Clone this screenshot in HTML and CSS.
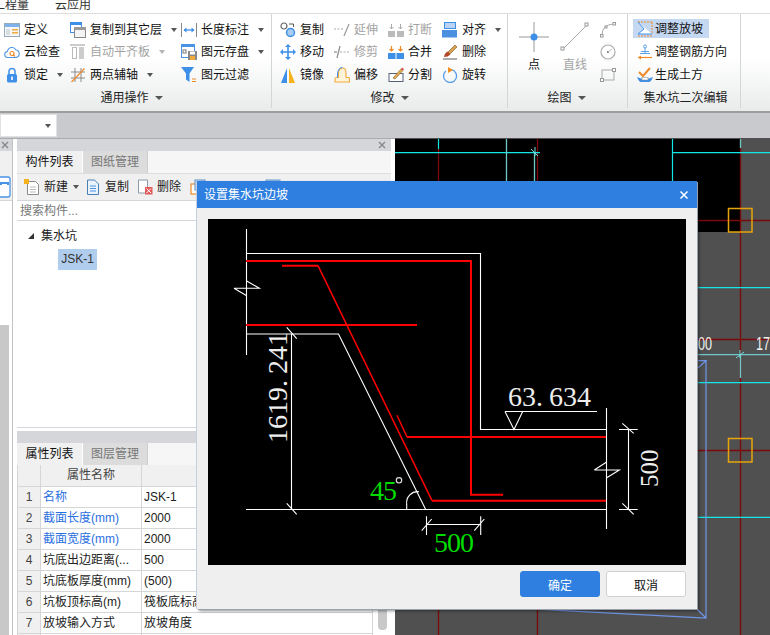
FILE: index.html
```html
<!DOCTYPE html>
<html lang="zh">
<head>
<meta charset="utf-8">
<title>设置集水坑边坡</title>
<link rel="stylesheet" href="styles.css">
</head>
<body>
<div class="app">
  <div class="menu"><span class="m1">工程量</span><span class="m2">云应用</span></div>

  <div class="ribbon">
    <section class="group g1">
      <div class="rows">
        <div class="it"><svg class="ic" viewBox="0 0 16 16"><rect x="0.5" y="1.5" width="15" height="13" fill="#f4f6f8" stroke="#9ab"/><rect x="1" y="2" width="14" height="3" fill="#7fb2ea"/><path d="M2 7h4v6H2z" fill="#d8dde2"/><path d="M8 7h6v1.500H8zM8 10h6v1.500H8z" fill="#f2a93b"/></svg><span>定义</span></div>
        <div class="it"><svg class="ic" viewBox="0 0 16 16"><path d="M4 13.500a3 3 0 0 1-.5-6A4.500 4.500 0 0 1 12 6a3.800 3.800 0 0 1 0 7.500z" fill="#fff" stroke="#4a94e6" stroke-width="1.100"/><circle cx="8" cy="9.500" r="2" fill="none" stroke="#ef8a2a" stroke-width="1.200"/><path d="M9.500 11l1.500 1.500" stroke="#ef8a2a" stroke-width="1.200"/></svg><span class="w2">云检查</span></div>
        <div class="it"><svg class="ic" viewBox="0 0 16 16"><path d="M5 7V4.500a3 3 0 0 1 6 0V7" fill="none" stroke="#4a94e6" stroke-width="1.600"/><rect x="3" y="7" width="10" height="8.500" rx="1.500" fill="#3d8fe8"/><rect x="7.200" y="9.500" width="1.600" height="3.500" fill="#fff"/></svg><span>锁定</span><i class="caret"></i></div>

        <div class="it"><svg class="ic" viewBox="0 0 16 16"><rect x="0.500" y="0.500" width="11" height="10" fill="#fff" stroke="#3d8fe8"/><rect x="0" y="0" width="12" height="3" fill="#3d8fe8"/><rect x="4.500" y="5.500" width="11" height="10" fill="#f4f4f4" stroke="#888"/><rect x="4" y="5" width="12" height="3" fill="#9a9a9a"/></svg><span>复制到其它层</span><i class="caret"></i></div>
        <div class="it off"><svg class="ic" viewBox="0 0 16 16"><path d="M0 1h15" stroke="#bbb" stroke-width="1.500"/><rect x="2.500" y="3.500" width="4" height="11" fill="#fff" stroke="#bbb"/><rect x="9" y="3" width="5" height="12" fill="#ccc"/></svg><span>自动平齐板</span><i class="caret"></i></div>
        <div class="it"><svg class="ic" viewBox="0 0 16 16"><path d="M5 1v14M11 1v14M1 5h14M1 11h14" stroke="#8a8a8a"/><path d="M1.500 15L14.500 1.500" stroke="#ef8a2a" stroke-width="1.200"/></svg><span>两点辅轴</span><i class="caret"></i></div>

        <div class="it"><svg class="ic" viewBox="0 0 16 16"><path d="M.5 1v14M15.500 1v14" stroke="#888"/><path d="M3 8h10" stroke="#3d8fe8" stroke-width="1.300"/><path d="M2.500 8l3-2.500v5zM13.500 8l-3-2.500v5z" fill="#3d8fe8"/></svg><span>长度标注</span><i class="caret"></i></div>
        <div class="it"><svg class="ic" viewBox="0 0 16 16"><rect x="0.500" y="0.500" width="13" height="13" fill="#fff" stroke="#4a94e6"/><rect x="0" y="0" width="14" height="3" fill="#4a94e6"/><rect x="2" y="6" width="3" height="3" fill="none" stroke="#777"/><rect x="7" y="7" width="9" height="9" fill="#888"/><rect x="9" y="7.500" width="5" height="3" fill="#fff"/><rect x="9" y="12" width="5" height="4" fill="#f2a93b"/></svg><span>图元存盘</span><i class="caret"></i></div>
        <div class="it"><svg class="ic" viewBox="0 0 16 16"><path d="M0 0h13L8.500 6.500V15L5 12.500V6.500z" fill="#3d8fe8"/><path d="M11 12h4M11 14.500h4" stroke="#ef8a2a" stroke-width="1.200"/></svg><span>图元过滤</span></div>
      </div>
      <div class="label">通用操作<i class="caret big"></i></div>
    </section>

    <section class="group g2">
      <div class="rows">
        <div class="it"><svg class="ic" viewBox="0 0 16 16"><circle cx="4" cy="4" r="3" fill="#fff" stroke="#666" stroke-width="1.200"/><circle cx="10.500" cy="10.500" r="4" fill="#a8cdf2" stroke="#3d8fe8" stroke-width="1.500"/><path d="M9 2h4.500v3" fill="none" stroke="#555"/></svg><span>复制</span></div>
        <div class="it"><svg class="ic" viewBox="0 0 16 16"><path d="M8 2v12M2 8h12" stroke="#3d8fe8" stroke-width="1.600"/><path d="M8 0l3 3H5zM8 16l-3-3h6zM0 8l3-3v6zM16 8l-3 3V5z" fill="#3d8fe8"/></svg><span>移动</span></div>
        <div class="it"><svg class="ic" viewBox="0 0 16 16"><path d="M7 1v15H1z" fill="#3d8fe8"/><path d="M9 1v15h6z" fill="#f6b21c"/></svg><span>镜像</span></div>

        <div class="it off"><svg class="ic" viewBox="0 0 16 16"><path d="M0 7h9" stroke="#aaa" stroke-dasharray="2 1.500"/><path d="M10 14L15 2" stroke="#999" stroke-width="1.200"/></svg><span>延伸</span></div>
        <div class="it off"><svg class="ic" viewBox="0 0 16 16"><path d="M6 8h10" stroke="#aaa" stroke-dasharray="2 1.500"/><path d="M0 8h3" stroke="#777"/><path d="M3 14L6 2" stroke="#888" stroke-width="1.200"/></svg><span>修剪</span></div>
        <div class="it"><svg class="ic" viewBox="0 0 16 16"><path d="M1 15V12q0-1.500 2-1.500h1.500V6Q5 1 8.500 1T12 6v4.500h2q1.500 0 1.500 1.500v3z" fill="#fff3d8" stroke="#f2a93b" stroke-width="1.100"/><path d="M3.500 10.500V7Q4 .5 8.500 .5" fill="none" stroke="#3d8fe8"/></svg><span>偏移</span></div>

        <div class="it off"><svg class="ic" viewBox="0 0 16 16"><rect x="0" y="9" width="7" height="6" fill="#bbb"/><rect x="9" y="9" width="7" height="6" fill="#bbb"/><path d="M3.500 2v5M1.500 5l2 2 2-2M12.500 2v5M10.500 5l2 2 2-2" fill="none" stroke="#aaa"/></svg><span>打断</span></div>
        <div class="it"><svg class="ic" viewBox="0 0 16 16"><rect x="0" y="9" width="7.500" height="6" fill="#3d8fe8"/><rect x="8.500" y="9" width="7.500" height="6" fill="#3d8fe8"/><path d="M3.500 2v5M1.500 5l2 2 2-2M12.500 2v5M10.500 5l2 2 2-2" fill="none" stroke="#ef8a2a" stroke-width="1.200"/></svg><span>合并</span></div>
        <div class="it"><svg class="ic" viewBox="0 0 16 16"><rect x="1" y="6.500" width="14" height="8" fill="#fff" stroke="#56607a"/><path d="M5 11L13 2l2 1.500L7 12z" fill="#e2b050" stroke="#8a5a2a" stroke-width=".6"/><path d="M13 2l1-1.500 2 1.500-1 1.500z" fill="#d9534f"/></svg><span>分割</span></div>

        <div class="it"><svg class="ic" viewBox="0 0 16 16"><rect x="2.500" y="0.500" width="11" height="6" fill="#b8d4f2" stroke="#3d8fe8"/><rect x="0" y="8" width="15" height="7.500" fill="#4a8fe0"/></svg><span>对齐</span><i class="caret"></i></div>
        <div class="it"><svg class="ic" viewBox="0 0 16 16"><path d="M1 15h14" stroke="#333" stroke-width=".8"/><path d="M6 8l7-7 2 2-7 7z" fill="#d9a050" stroke="#7a5a30" stroke-width=".6"/><path d="M2 13q.5-4 3.500-5.500l3 3Q6 13 2 13z" fill="#b5482a"/></svg><span>删除</span></div>
        <div class="it"><svg class="ic" viewBox="0 0 16 16"><path d="M9.500 2.600A6.500 6.500 0 1 1 3.800 4" fill="none" stroke="#5aa0e8" stroke-width="1.300"/><path d="M6 0v6l5-3z" fill="#f28c1e"/></svg><span>旋转</span></div>
      </div>
      <div class="label">修改<i class="caret big"></i></div>
    </section>

    <section class="group g3">
      <div class="draw">
        <div class="tall">
          <svg class="big-ic" viewBox="0 0 30 30"><path d="M0 15h30M15 0v30" stroke="#999"/><circle cx="15" cy="15" r="3.500" fill="#3d8fe8"/></svg>
          <span>点</span>
        </div>
        <div class="tall off">
          <svg class="big-ic" viewBox="0 0 30 30"><path d="M3 27L27 3" stroke="#aaa"/><rect x="1" y="25" width="3" height="3" fill="#fff" stroke="#999"/><rect x="25" y="1" width="3" height="3" fill="#fff" stroke="#999"/></svg>
          <span>直线</span>
        </div>
        <div class="mini">
          <svg class="ic" viewBox="0 0 16 16"><path d="M2 13Q2 3 13 2" fill="none" stroke="#aaa"/><rect x=".5" y="12.500" width="2.500" height="2.500" fill="#fff" stroke="#999"/><rect x="13" y=".5" width="2.500" height="2.500" fill="#fff" stroke="#999"/><rect x="5" y="4" width="2" height="2" fill="#fff" stroke="#999"/></svg>
          <svg class="ic" viewBox="0 0 16 16"><circle cx="8" cy="8" r="7" fill="none" stroke="#aaa" stroke-width="1.200"/><rect x="7" y="7" width="2" height="2" fill="#888"/><path d="M8 8l4-3" stroke="#bbb"/></svg>
          <svg class="ic" viewBox="0 0 16 16"><rect x="2" y="3" width="12" height="10" fill="none" stroke="#aaa"/><rect x=".5" y="11.500" width="3" height="3" fill="#fff" stroke="#999"/><rect x="12.500" y="1.500" width="3" height="3" fill="#fff" stroke="#999"/></svg>
        </div>
      </div>
      <div class="label">绘图<i class="caret big"></i></div>
    </section>

    <section class="group g4">
      <div class="stack">
        <div class="it sel"><svg class="ic" viewBox="0 0 16 16"><path d="M1 1h14M15 1v12M1 15h14" stroke="#ef8a2a" stroke-dasharray="2 1"/><path d="M1 1L7 8 1 13h14" fill="#fff" stroke="#3d8fe8"/></svg><span>调整放坡</span></div>
        <div class="it"><svg class="ic" viewBox="0 0 16 16"><circle cx="8" cy="2.500" r="1.500" fill="none" stroke="#5aa0e8"/><path d="M8 4v5M3 9.500h10M4 7.500h8" stroke="#5aa0e8"/><path d="M1 13.500h14" stroke="#ef8a2a" stroke-width="1.200"/><path d="M1 13.500l3-2v4z" fill="#ef8a2a"/></svg><span>调整钢筋方向</span></div>
        <div class="it"><svg class="ic" viewBox="0 0 16 16"><path d="M2 5l4 4 7-8" fill="none" stroke="#ef8a2a" stroke-width="2"/><path d="M0 10q8 4 16 0-2 5-4 5H4q-2 0-4-5z" fill="#3d8fe8"/><rect x="5" y="10.500" width="6" height="2.500" fill="#fff" stroke="#888" stroke-width=".5"/></svg><span>生成土方</span></div>
      </div>
      <div class="label">集水坑二次编辑</div>
    </section>
  </div>

  <div class="bar"><div class="combo"><i class="caret"></i></div></div>

  <div class="main">
    <aside class="side">
      <div class="head left"><svg class="x" viewBox="0 0 8 8"><path d="M1 1l6 6M7 1L1 7" stroke="#888" stroke-width="1.400"/></svg></div>
      <div class="side-tools"><svg class="side-ic" viewBox="0 0 11 22"><rect x="-6" y="1" width="16" height="20" rx="2" fill="#fff" stroke="#4a94e6" stroke-width="1.300"/><rect x="-6" y="6" width="15" height="3" fill="#4a94e6"/><rect x="2" y="8" width="5" height="1.500" fill="#fff"/></svg></div>
      <div class="side-thumb"></div>
    </aside>

    <div class="panels">
      <section class="panel top">
        <div class="head"><svg class="x" viewBox="0 0 8 8"><path d="M1 1l6 6M7 1L1 7" stroke="#888" stroke-width="1.400"/></svg></div>
        <div class="tabs"><b class="tab on">构件列表</b><b class="tab">图纸管理</b></div>
        <div class="tools">
          <div class="tool"><svg class="ic" viewBox="0 0 16 16"><path d="M3.500 2.500h8l3 3v10h-11z" fill="#fff" stroke="#8a8a8a"/><path d="M6 8h6M6 10.500h6M6 13h6" stroke="#bbb"/><rect x="0" y="0" width="5" height="5" fill="#f6b21c"/></svg><span>新建</span><i class="caret"></i></div>
          <div class="tool"><svg class="ic" viewBox="0 0 16 16"><path d="M2.500 1h7l4 4v10.500h-11z" fill="#eaf3fc" stroke="#4a7fb5"/><path d="M5 7h6M5 9.500h6M5 12h6" stroke="#4a94e6"/></svg><span>复制</span></div>
          <div class="tool"><svg class="ic" viewBox="0 0 16 16"><path d="M1.500 1h9v13h-9z" fill="#fff" stroke="#8a9aa8"/><rect x="8" y="8" width="7.500" height="7.500" fill="#e05a5a"/><path d="M9.500 9.500l4.500 4.500M14 9.500L9.500 14" stroke="#fff"/></svg><span>删除</span></div>
          <div class="tool"><svg class="ic" viewBox="0 0 16 16"><rect x="1" y="5" width="9" height="10" fill="#fff" stroke="#ef8a2a" stroke-width="1.200"/><rect x="5" y="1" width="10" height="10" fill="#d8e6f6" stroke="#5a90c8"/></svg></div>
          <div class="tool"><svg class="ic" viewBox="0 0 16 16"><rect x="1" y="1" width="14" height="14" fill="#a8c8ea" stroke="#6a9ccc"/></svg></div>
        </div>
        <div class="search">搜索构件...</div>
        <div class="tree">
          <div class="node"><i class="arrow"></i>集水坑</div>
          <div class="leaf">JSK-1</div>
        </div>
      </section>

      <section class="panel bottom">
        <div class="head"></div>
        <div class="tabs"><b class="tab on">属性列表</b><b class="tab">图层管理</b></div>
        <div class="grid-wrap">
          <table class="props">
            <colgroup><col class="c0"><col class="c1"><col class="c2"></colgroup>
            <tr class="th"><th></th><th>属性名称</th><th></th></tr>
            <tr><th>1</th><td class="blue">名称</td><td>JSK-1</td></tr>
            <tr><th>2</th><td class="blue">截面长度(mm)</td><td>2000</td></tr>
            <tr><th>3</th><td class="blue">截面宽度(mm)</td><td>2000</td></tr>
            <tr><th>4</th><td>坑底出边距离(...</td><td>500</td></tr>
            <tr><th>5</th><td>坑底板厚度(mm)</td><td>(500)</td></tr>
            <tr><th>6</th><td>坑板顶标高(m)</td><td>筏板底标高</td></tr>
            <tr><th>7</th><td>放坡输入方式</td><td>放坡角度</td></tr>
            <tr><th></th><td></td><td></td></tr>
          </table>
          <div class="scroll"><div class="thumb"></div></div>
        </div>
      </section>
    </div>

    <div class="canvas">
      <svg class="cad" viewBox="395 138 375 497">
        <rect x="395" y="138" width="375" height="497" fill="#505050"/>
        <rect x="395" y="139" width="345" height="93" fill="#000"/>
        <path d="M438.500 149V181M537.500 139V181M740.500 148V635M698 220.500H770M698 339.500H770M698 450.500H770M438.500 609V635M537.500 609V635" stroke="#7d0808" stroke-width="1.300" fill="none"/>
        <path d="M395 152.700H540M672 152.700H770M698 287.700H770M698 382.700H770M698 517.300H770" stroke="#14e6e6" stroke-width="1.300" fill="none"/>
        <path d="M438.500 139V149M672.500 139V181" stroke="#14e6e6" stroke-width="1.200" fill="none"/>
        <path d="M506.500 139V181M534.500 152V181M740.500 139V148M698 354.700H770M740.500 354V378" stroke="#70c8c8" stroke-width="1.300" fill="none"/>
        <path d="M531 149l7 7M535 147v9M736 358l8-6M740 350v8" stroke="#70e0e0" fill="none"/>
        <rect x="728.500" y="208.500" width="23.500" height="23.500" fill="none" stroke="#e5a50a" stroke-width="1.500"/>
        <rect x="728.500" y="438.500" width="23.500" height="23.500" fill="none" stroke="#e5a50a" stroke-width="1.500"/>
        <path d="M698 368L706 360.700H698M706 360.700V618L540 609.300M696.700 609L706 618" stroke="#6f95e8" stroke-width="1.200" fill="none"/>
        <text class="dimtxt" x="691" y="350" textLength="21" lengthAdjust="spacingAndGlyphs">700</text>
        <text class="dimtxt" x="756" y="350" textLength="21" lengthAdjust="spacingAndGlyphs">170</text>
      </svg>
    </div>
  </div>

  <div class="dialog">
    <div class="d-title"><span>设置集水坑边坡</span><svg class="d-close" viewBox="0 0 10 10"><path d="M1.500 1.500l7 7M8.500 1.500l-7 7" stroke="#fff" stroke-width="1.500"/></svg></div>
    <div class="d-body">
      <svg class="diagram" viewBox="208 219 478 346">
        <rect x="208" y="219" width="478" height="346" fill="#000"/>
        <g fill="none" stroke="#fff" stroke-width="1.100">
          <path d="M246.500 229V355M246.500 253.500H480.500V429.500H606.500M246.500 334H338.500L425.700 509.500M246 509.500H606.500M606.500 408V529"/>
          <path d="M234 288.300H259.300L246.700 281M234 288.300L246.700 295.700"/>
          <path d="M291.500 334V509.500M286.700 327.300L296.700 338.700M286.700 503.300L296.700 514.300"/>
          <path d="M406.700 509.500V504A11 11 0 0 1 419 491.700"/>
          <path d="M426.500 516.300V535M480.700 516.300V535M426.500 524.500H480.700M421.700 530.700L431.700 519M474.300 530.700L484.300 519"/>
          <path d="M505 411.500H597M505 411.500L514 429.500L522.700 411.500"/>
          <path d="M628.500 429.500V509.500M619 429.500H637.700M619 509.500H637.700M622.300 423.300L633.700 433.300M622.300 503.300L633.700 514.300"/>
          <path d="M594.300 470H619.300L606.700 477.700M594.300 470L606.700 462"/>
        </g>
        <g fill="none" stroke="#f00" stroke-width="2">
          <path d="M246 261H471V494.700H503"/>
          <path d="M282 265.700H318M432 500.700H606"/>
          <path d="M246 325H417"/>
          <path d="M407 437H606"/>
        </g>
        <path d="M318 265.700L432 500.700M397 415.300L407 437" fill="none" stroke="#f00" stroke-width="1.500"/>
        <text class="cad-w" x="508" y="406">63.<tspan dx="6">634</tspan></text>
        <text class="cad-w" transform="translate(287 443) rotate(-90)">1619.<tspan dx="6">241</tspan></text>
        <text class="cad-s" transform="translate(658 487) rotate(-90)">500</text>
        <text class="cad-g" x="370" y="500" letter-spacing="-1">45</text>
        <circle cx="399" cy="480.300" r="2.700" fill="none" stroke="#ddd" stroke-width="1.200"/>
        <text class="cad-g" x="434" y="552" letter-spacing="-1">500</text>
      </svg>
      <div class="d-foot">
        <button class="btn primary">确定</button>
        <button class="btn">取消</button>
      </div>
    </div>
  </div>
</div>
</body>
</html>
```

FILE: styles.css
```css
* { box-sizing: border-box; }
html, body { margin: 0; padding: 0; }
body { width: 770px; height: 635px; overflow: hidden; background: #fff; color: #111; font: 12px/16px "Liberation Sans", "Noto Sans CJK SC", sans-serif; }
svg { display: block; }
i { display: block; font-style: normal; }
.app { position: relative; width: 770px; height: 635px; display: flex; flex-direction: column; overflow: hidden; }

.menu { height: 14px; flex: none; display: flex; overflow: hidden; border-bottom: 1px solid #dcdcdc; color: #333; line-height: 12px; }
.m1 { margin-left: -7px; width: 62px; margin-top: -1px; height: 12px; }
.m2 { margin-top: -1px; height: 12px; }

.ribbon { height: 97px; flex: none; display: flex; background: linear-gradient(#fff 45%, #e9ebeb); }
.group { flex: none; padding-top: 4.500px; position: relative; border-right: 1px solid #d4d6d6; margin-bottom: 3px; }
.rows { display: grid; grid-template-rows: repeat(3, 22.5px); grid-auto-flow: column; height: 67.5px; }
.g1 { width: 272px; padding-left: 4px; }
.g1 .rows { grid-template-columns: 66px 111px 80px; }
.g2 { width: 236px; padding-left: 8px; }
.g2 .rows { grid-template-columns: repeat(4, 54px); }
.g3 { width: 120px; }
.g4 { width: 113px; padding-left: 5px; }
.it { display: flex; align-items: center; gap: 4px; white-space: nowrap; }
.ic { width: 16px; height: 16px; flex: none; }
.off { color: #a3a3a3; }
.off .caret { border-top-color: #b5b5b5; }
.caret { width: 0; height: 0; border: 3.500px solid transparent; border-top: 4px solid #555; border-bottom: 0; margin-left: 5px; flex: none; }
.caret.big { border-width: 4px 4px 0; margin-left: 6px; }
.label { height: 20px; margin-top: 2px; display: flex; align-items: center; justify-content: center; color: #222; }
.g1 .label { padding-right: 12px; }
.g2 .label { padding-right: 8px; }
.g3 .label { padding-right: 2px; }
.g4 .label { padding-right: 2px; }

.draw { height: 67.500px; display: flex; padding-left: 11px; }
.tall { width: 41px; display: flex; flex-direction: column; align-items: flex-start; padding-top: 3px; }
.tall span { width: 30px; text-align: center; margin-top: 5px; }
.big-ic { width: 30px; height: 30px; }
.mini { display: grid; grid-template-rows: repeat(3, 22.500px); align-items: center; padding-top: 0; margin-left: -1px; }
.stack { height: 67.500px; display: grid; grid-template-rows: repeat(3, 22.500px); }
.stack .it { width: 76px; padding-left: 4px; gap: 2px; white-space: nowrap; }
.stack .sel { background: #c5d8f1; height: 19px; align-self: center; margin-top: -2px; }

.bar { height: 27px; flex: none; background: #c8cacd; border-top: 2px solid #9b9d9f; padding-top: 1px; }
.combo { width: 57px; height: 23px; background: #fff; border: 1px solid #e2e2e2; display: flex; align-items: center; justify-content: flex-end; padding-right: 5px; }

.main { flex: 1; display: flex; min-height: 0; border-top: 1px solid #aaacae; }
.side { width: 13px; flex: none; border-right: 1px solid #c0c2c4; display: flex; flex-direction: column; background: #fff; }
.head { height: 12px; flex: none; background: #d4d6da; display: flex; align-items: center; justify-content: flex-end; padding-right: 5px; }
.head.left { padding: 0 0 0 1px; justify-content: flex-start; }
.x { width: 8px; height: 8px; }
.side-tools { height: 50px; flex: none; background: #f0f0f0; border-bottom: 1px solid #d4d6da; padding-top: 25px; }
.side-ic { width: 11px; height: 22px; }
.side-thumb { width: 9px; flex: 1; margin-top: 124px; background: #c8c8c8; }

.panels { width: 374px; flex: none; margin-left: 4px; display: flex; flex-direction: column; margin-right: 4px; }
.panel { background: #fff; }
.top { height: 289px; border-bottom: 1px solid #d4d6da; flex: none; }
.bottom { margin-top: 3px; flex: 1; min-height: 0; overflow: hidden; }
.tabs { height: 22px; background: #f6f6f6; display: flex; }
.tab { width: 65px; font-weight: normal; text-align: center; line-height: 22px; background: #dcdcdc; color: #777; border-right: 1px solid #ccc; }
.tab.on { background: #f0f0f0; color: #111; border-right: 1px solid #fff; width: 66px; }

.tools { height: 28px; background: #f0f0f0; border-bottom: 1px solid #d4d6da; border-top: 1px solid #ddd; display: flex; padding-left: 7px; overflow: hidden; }
.tool { display: flex; align-items: center; gap: 4px; flex: none; margin-right: 9px; color: #222; white-space: nowrap; }
.tool .caret { margin-left: 1px; }
.tool:first-child { margin-right: 6px; }
.tool:nth-child(2) { margin-right: 8px; }
.tool:nth-child(4) { margin-right: 0; width: 75px; }
.search { height: 20px; line-height: 20px; padding-left: 3px; color: #777; border-bottom: 1px solid #d4d6da; }
.tree { padding: 6px 0 0 11px; }
.node { display: flex; align-items: center; height: 18px; color: #222; }
.arrow { width: 0; height: 0; border-style: solid; border-width: 0 0 6px 6px; border-color: transparent transparent #333 transparent; margin-right: 7px; }
.leaf { margin: 4px 0 0 30px; width: 39px; height: 21px; line-height: 21px; text-align: center; background: #b0cdee; color: #333; }

.grid-wrap { display: flex; }
.props { width: 356px; flex: none; border-collapse: collapse; table-layout: fixed; }
.c0 { width: 23px; }
.c1 { width: 101px; }
.props th, .props td { height: 21px; padding: 0; border: 1px solid #d4d6d8; font-weight: normal; white-space: nowrap; overflow: hidden; }
.props th { background: #f0f0f0; color: #444; text-align: center; }
.props tr:first-child th { border-top: 0; height: 21px; }
.props td { padding-left: 2px; color: #222; }
.props td + td { padding-left: 2px; }
.props td.blue { color: #2a6fe0; }
.scroll { width: 18px; flex: none; padding: 135px 0 0 5px; }
.thumb { width: 9px; height: 30px; background: #c8c8c8; border-radius: 0 0 4px 4px; }

.canvas { flex: 1; min-width: 0; }
.cad { width: 375px; height: 497px; margin-top: -1px; }
.dimtxt { font: 18px "Liberation Sans", sans-serif; fill: #f2f2f2; }

.dialog { position: absolute; left: 197px; top: 181px; width: 500px; height: 428px; background: #efefef; display: flex; flex-direction: column; box-shadow: 1px 1px 0 #9aa0aa, -1px 0 0 #c5cfdf, 2px 2px 3px rgba(0,0,0,.45); }
.d-title { height: 27px; flex: none; background: #2e7fe0; color: #fff; display: flex; align-items: center; justify-content: space-between; padding: 0 8px 0 7px; }
.d-close { width: 10px; height: 10px; }
.d-body { flex: 1; padding: 11px 11px 0; }
.diagram { width: 478px; height: 346px; }
.cad-w { font: 28px "Liberation Serif", serif; fill: #eee; }
.cad-s { font: 25px "Liberation Serif", serif; fill: #eee; }
.cad-g { font: 28px "Liberation Serif", serif; fill: #00dc00; }
.d-foot { display: flex; justify-content: flex-end; gap: 6px; margin-top: 6px; }
.btn { width: 80px; height: 26px; padding: 0; font: 12px "Liberation Sans", "Noto Sans CJK SC", sans-serif; color: #111; background: #fff; border: 1px solid #d0d0d0; border-radius: 3px; }
.btn.primary { background: #2e7fe0; border-color: #2e7fe0; color: #fff; }
```
